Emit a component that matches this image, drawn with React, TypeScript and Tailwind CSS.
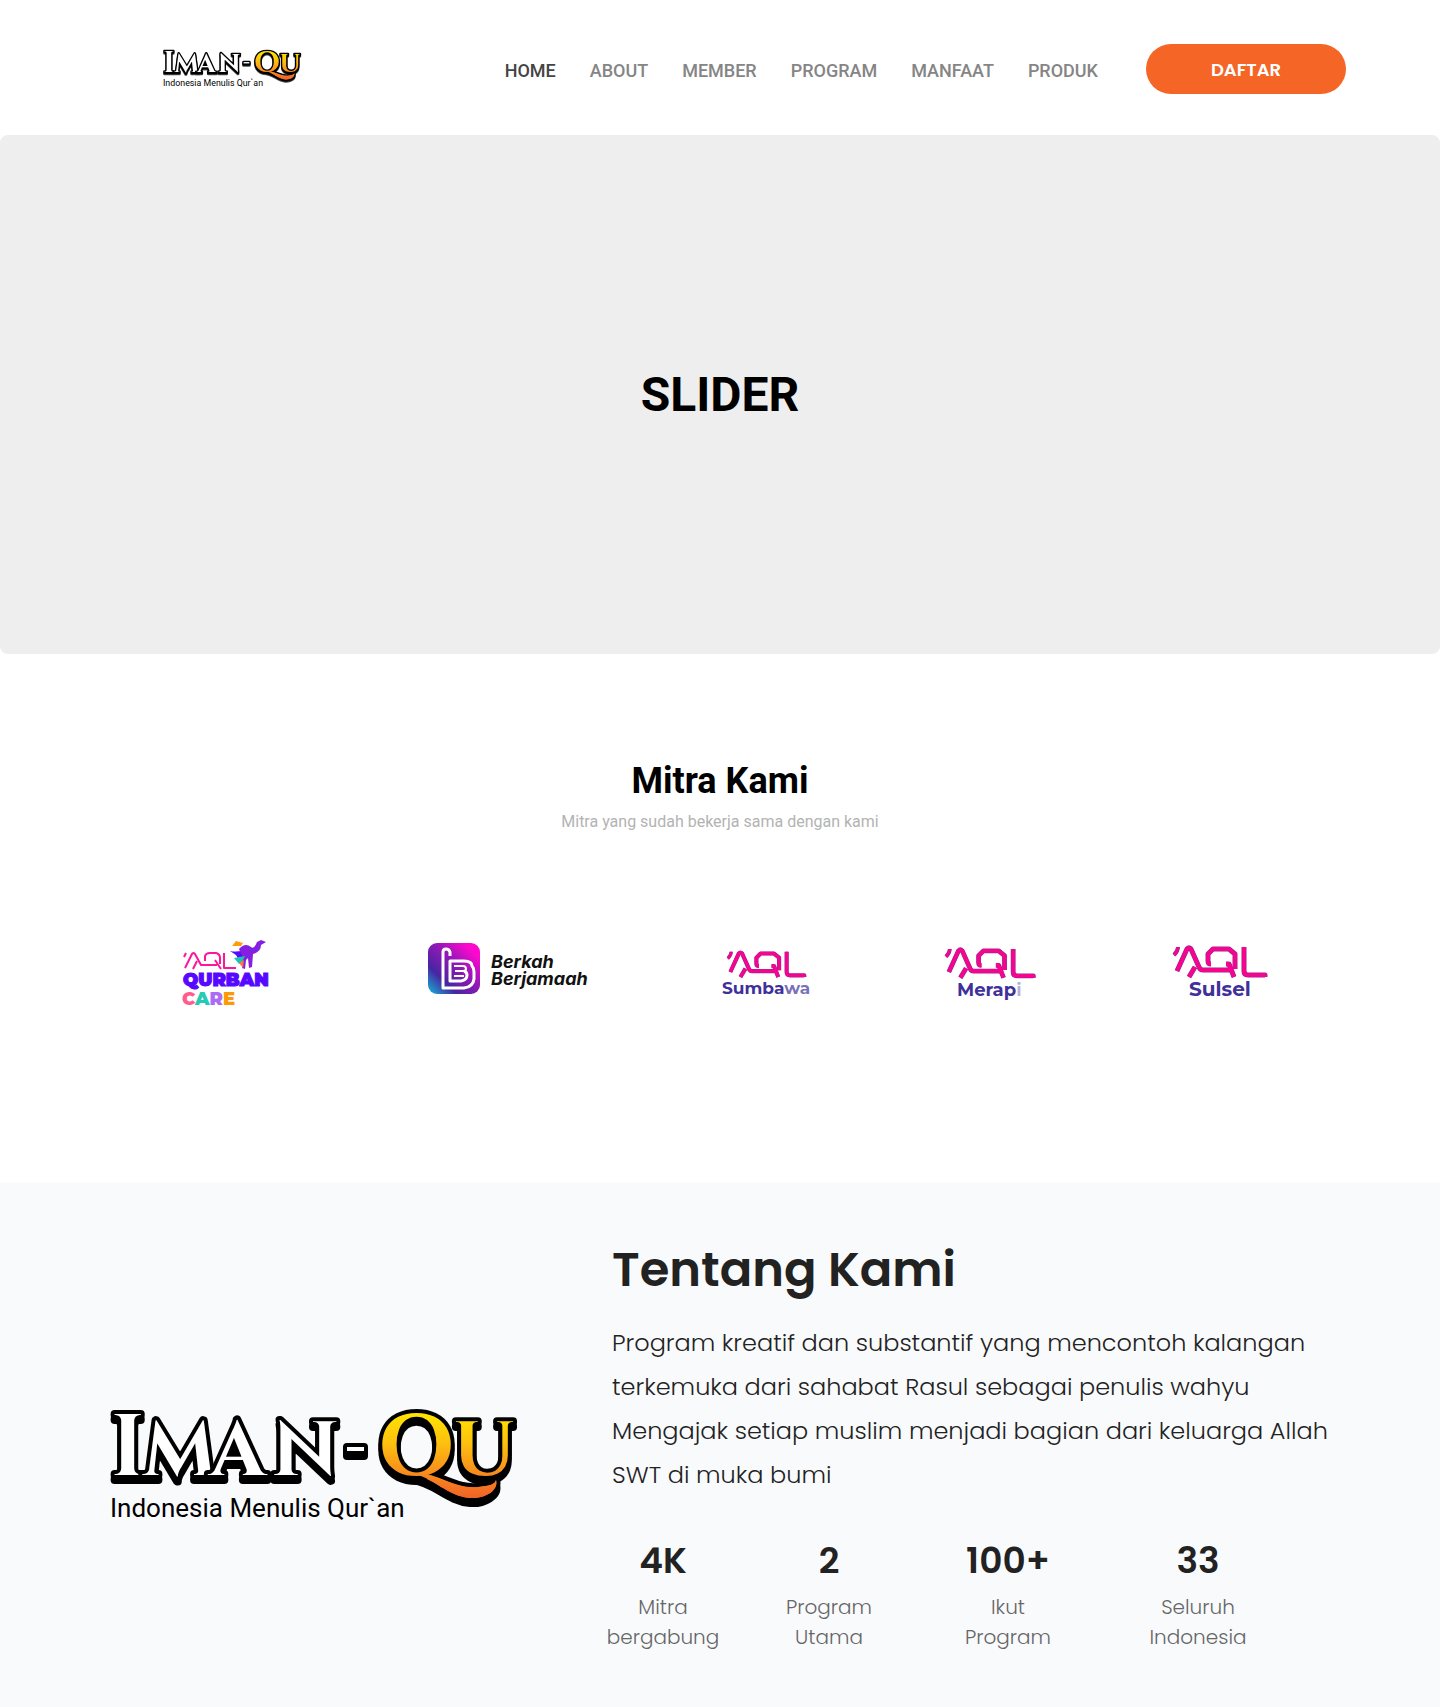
import React from "react";

const navItems = ["HOME", "ABOUT", "MEMBER", "PROGRAM", "MANFAAT", "PRODUK"];

const stats = [
  { value: "4K", top: "Mitra", bottom: "bergabung", width: "w-[122px]" },
  { value: "2", top: "Program", bottom: "Utama", width: "w-[210px]" },
  { value: "100+", top: "Ikut", bottom: "Program", width: "w-[148px]" },
  { value: "33", top: "Seluruh", bottom: "Indonesia", width: "w-[232px]" },
];

function ImanQuLogo({ id, className }: { id: string; className: string }) {
  const gold = `url(#${id})`;
  return (
    <svg viewBox="0 -20 408 150" className={className} role="img" aria-label="Iman-Qu, Indonesia Menulis Qur`an">
      <defs>
        <linearGradient id={id} gradientUnits="userSpaceOnUse" x1="0" y1="4" x2="0" y2="94">
          <stop offset="0" stopColor="#ffe500" />
          <stop offset="0.35" stopColor="#fdc010" />
          <stop offset="1" stopColor="#f15a29" />
        </linearGradient>
      </defs>
      <g
        className="[filter:drop-shadow(0_5px_0_#000)] [paint-order:stroke]"
        fontFamily="Cinzel, 'Liberation Serif', serif"
        fontWeight="700"
        fill="#fff"
        stroke="#000"
        strokeWidth="8"
        strokeLinejoin="round"
      >
        <text x="2" y="67" fontSize="86">I</text>
        <text x="34" y="67" fontSize="77">M</text>
        <text x="101" y="67" fontSize="77">A</text>
        <text x="163" y="67" fontSize="77">N</text>
        <rect x="238" y="39" width="17" height="4" />
      </g>
      <g
        className="[filter:drop-shadow(0_5px_0_#000)] [paint-order:stroke]"
        fontFamily="Cinzel, 'Liberation Serif', serif"
        fontWeight="700"
        fill={gold}
        stroke="#000"
        strokeWidth="8"
        strokeLinejoin="round"
      >
        <text x="344" y="67" fontSize="76">U</text>
        <path d="M304 67C325 61 345 82 369 79C381 78 386 76 387 72C390 83 375 91 361 90C338 88 326 70 304 67Z" />
        <text x="269" y="67" fontSize="87">O</text>
      </g>
      <path d="M312 66C325 64 345 82 369 79C381 78 386 76 387 72C390 83 375 91 361 90C338 88 326 70 302 65Z" fill={gold} />
      <text x="1" y="109" fontSize="26" fontFamily="Roboto, sans-serif" fill="#000">Indonesia Menulis Qur`an</text>
    </svg>
  );
}

function AqlMark() {
  return (
    <g fill="none" strokeLinejoin="round">
      {["#8a2aa0", "#f5058c"].map((color, i) => (
        <g key={color} stroke={color} strokeWidth={i === 0 ? 5 : 4}>
          <path d="M5 1Q5 5 1 9" strokeWidth={i === 0 ? 4 : 3} />
          <path d="M4 25L14 3Q16 1 18 3L26 21Q27 24 30 24H58" />
          <path d="M22 21L16 31" />
          <path d="M38 18Q35 18 35 15V8L40 3H56L62 8V23" />
          <path d="M53 18H56L61 31" />
          <path d="M71 1V25Q71 29 75 29H92V31" />
        </g>
      ))}
    </g>
  );
}

function AqlBranch({
  name,
  tail,
  tailOpacity,
  textX,
  baseline,
  fontSize,
  place,
}: {
  name: string;
  tail: string;
  tailOpacity: number;
  textX: number;
  baseline: number;
  fontSize: number;
  place: string;
}) {
  return (
    <svg viewBox="0 0 94 64" className="h-[64px] w-[94px] overflow-visible" role="img" aria-label={`AQL ${name}${tail}`}>
      <g transform={place}>
        <AqlMark />
      </g>
      <text
        x={textX}
        y={baseline}
        fontFamily="Montserrat, Poppins, sans-serif"
        fontSize={fontSize}
        fontWeight="700"
        fill="#40309b"
      >
        {name}
        <tspan fillOpacity={tailOpacity}>{tail}</tspan>
      </text>
    </svg>
  );
}

function QurbanCareLogo() {
  return (
    <svg viewBox="0 0 112 72" className="h-[72px] w-[112px]" role="img" aria-label="AQL Qurban Care">
      <g fill="none" stroke="#ff149c" strokeWidth="2" strokeLinejoin="round">
        <path d="M4 14L2 18M3 29L10 15Q11 13 13 15L19 26H35M15 22L11 30M23 22V17Q24 14 28 14H34Q38 15 38 19V25M33 21L39 30M42 14V29H54" />
      </g>
      <path d="M50 7L54 2L61 4L59 7Z" fill="#ff9d0a" />
      <path d="M48 12Q58 14 68 9L66 19L57 21L54 16Z" fill="#5a08ff" />
      <path d="M57 10Q63 3 69 8Q72 11 75 3L79 1L84 3L79 6Q79 13 71 15L70 28L67 29L66 19L64 21L63 30L60 29L60 17Z" fill="#8420df" />
      <path d="M52 19L63 17L60 23L57 25Z" fill="#17c5b5" />
      <path d="M57 24L62 21L61 29Z" fill="#ff7548" />
      <g fontFamily="Montserrat, Inter, sans-serif" fontSize="18" fontWeight="900">
        <text x="1" y="47" fill="#5708ff" stroke="#5708ff">QURBAN</text>
        <text x="0" y="66" fill="#ff5b8d">
          C<tspan fill="#25cbb5">A</tspan><tspan fill="#ab6bf5">R</tspan><tspan fill="#ff9808">E</tspan>
        </text>
      </g>
    </svg>
  );
}

function BerkahLogo() {
  return (
    <svg viewBox="0 0 164 60" className="h-[60px] w-[164px]" role="img" aria-label="Berkah Berjamaah">
      <defs>
        <linearGradient id="berkah" x1="0" y1="1" x2="1" y2="0">
          <stop offset="0" stopColor="#12b9d8" />
          <stop offset="0.28" stopColor="#4626a2" />
          <stop offset="0.6" stopColor="#9d16b9" />
          <stop offset="0.85" stopColor="#ff08ce" />
        </linearGradient>
      </defs>
      <rect x="2" y="4" width="52" height="51" rx="9" fill="url(#berkah)" />
      <g fill="none" stroke="#fff" strokeLinejoin="round">
        <path d="M24 17V13Q23 10 20 10Q17 10 17 13V49H38Q47 48 48 40V33Q48 29 46 27Q46 22 38 22H24V42H35Q41 41 41 36Q41 33 38 32" strokeWidth="3" />
        <path d="M28 27H37Q40 27 40 30Q40 32 37 32H29M28 37H38" strokeWidth="2" />
      </g>
      <g fontFamily="Inter, sans-serif" fontSize="18" fontWeight="700" fontStyle="italic" fill="#111">
        <text x="65" y="29">Berkah</text>
        <text x="65" y="46">Berjamaah</text>
      </g>
    </svg>
  );
}

export default function App() {
  return (
    <div className="flex min-h-screen flex-col bg-white font-['Roboto',sans-serif]">
      <header className="flex h-[135px] items-center justify-between pt-[3px] pr-[94px] pl-[162px]">
        <a href="#home" className="mb-1">
          <ImanQuLogo id="gold-small" className="h-[51px] w-[140px]" />
        </a>
        <div className="flex items-center gap-12">
          <nav className="flex gap-[34px] pt-1">
            {navItems.map((item, i) => (
              <a
                key={item}
                href={`#${item.toLowerCase()}`}
                className={i === 0 ? "text-lg font-medium text-[#444]" : "text-lg font-medium text-[#858585]"}
              >
                {item}
              </a>
            ))}
          </nav>
          <button className="h-[50px] w-[200px] rounded-full bg-[#f46526] pt-0.5 font-['Poppins','Inter',sans-serif] text-lg font-semibold text-white">
            DAFTAR
          </button>
        </div>
      </header>

      <main className="flex grow flex-col">
        <section className="flex h-[519px] items-center justify-center rounded-lg bg-[#eee]">
          <h1 className="text-5xl font-bold text-black">SLIDER</h1>
        </section>

        <section className="pt-[105px] pb-[172px]">
          <div className="text-center">
            <h2 className="text-4xl leading-[44px] font-bold text-black">Mitra Kami</h2>
            <p className="mt-[7px] text-base leading-6 text-[#b3b3b3]">Mitra yang sudah bekerja sama dengan kami</p>
          </div>
          <div className="mt-[105px] flex h-[72px] items-start justify-between pr-[173px] pl-[182px]">
            <QurbanCareLogo />
            <BerkahLogo />
            <AqlBranch name="Sumba" tail="wa" tailOpacity={0.7} textX={0} baseline={55} fontSize={17} place="translate(5 12) scale(.84)" />
            <AqlBranch name="Merap" tail="i" tailOpacity={0.4} textX={10} baseline={57} fontSize={18} place="translate(-2 9) scale(.96)" />
            <AqlBranch name="Sulsel" tail="" tailOpacity={1} textX={16} baseline={57} fontSize={20} place="translate(0 7)" />
          </div>
        </section>

        <section className="flex grow items-start bg-[#f9fafc] pr-[100px] pl-[109px] font-['Poppins','Inter',sans-serif] text-[#222]">
          <ImanQuLogo id="gold-large" className="mt-[205px] h-[150px] w-[408px] shrink-0" />
          <div className="ml-[95px] grow pt-[51px]">
            <h2 className="text-5xl leading-[72px] font-semibold">Tentang Kami</h2>
            <p className="mt-[15px] text-2xl leading-[44px] font-light">
              Program kreatif dan substantif yang mencontoh kalangan
              <br />
              terkemuka dari sahabat Rasul sebagai penulis wahyu
              <br />
              Mengajak setiap muslim menjadi bagian dari keluarga Allah
              <br />
              SWT di muka bumi
            </p>
            <dl className="mt-10 -ml-[10px] flex text-center">
              {stats.map((s) => (
                <div key={s.bottom + s.value} className={`${s.width} flex flex-col-reverse justify-end`}>
                  <dt className="mt-[7px] text-xl leading-[30px] font-light text-[#666]">
                    {s.top}
                    <br />
                    {s.bottom}
                  </dt>
                  <dd className="text-4xl leading-[48px] font-semibold">{s.value}</dd>
                </div>
              ))}
            </dl>
          </div>
        </section>
      </main>
    </div>
  );
}
